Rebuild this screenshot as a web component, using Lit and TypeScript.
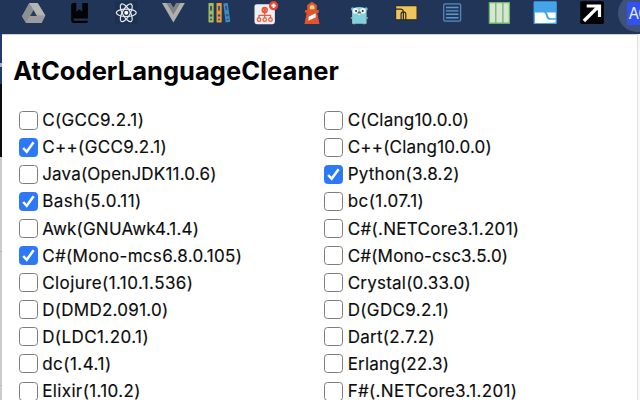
import { LitElement, html, svg, css } from "lit";
import { customElement, property } from "lit/decorators.js";
import { styleMap } from "lit/directives/style-map.js";

interface Language {
  name: string;
  tracking: number;
  checked?: boolean;
}

const LANGUAGES: Language[] = [
  { name: "C(GCC9.2.1)", tracking: 0.36 },
  { name: "C(Clang10.0.0)", tracking: 0.22 },
  { name: "C++(GCC9.2.1)", tracking: 0.34, checked: true },
  { name: "C++(Clang10.0.0)", tracking: 0.2 },
  { name: "Java(OpenJDK11.0.6)", tracking: 0.19 },
  { name: "Python(3.8.2)", tracking: 0.24, checked: true },
  { name: "Bash(5.0.11)", tracking: 0.46, checked: true },
  { name: "bc(1.07.1)", tracking: 0.44 },
  { name: "Awk(GNUAwk4.1.4)", tracking: 0.2 },
  { name: "C#(.NETCore3.1.201)", tracking: 0.3 },
  { name: "C#(Mono-mcs6.8.0.105)", tracking: 0.31, checked: true },
  { name: "C#(Mono-csc3.5.0)", tracking: 0.18 },
  { name: "Clojure(1.10.1.536)", tracking: 0.42 },
  { name: "Crystal(0.33.0)", tracking: 0.22 },
  { name: "D(DMD2.091.0)", tracking: 0.28 },
  { name: "D(GDC9.2.1)", tracking: 0.36 },
  { name: "D(LDC1.20.1)", tracking: 0.42 },
  { name: "Dart(2.7.2)", tracking: 0.28 },
  { name: "dc(1.4.1)", tracking: 0.48 },
  { name: "Erlang(22.3)", tracking: 0.2 },
  { name: "Elixir(1.10.2)", tracking: 0.37 },
  { name: "F#(.NETCore3.1.201)", tracking: 0.31 },
];

// Every icon is drawn around x = 0, with y measured from the top of the bar.
const ICONS = [
  // drive
  svg`<path d="M-3.9 3H4.3L12 15.6 8.2 23H-7.2L-11.3 16.2Z" fill="#a4a6a7"/>
    <path d="M-3.9 3 .1 10-7.2 23-11.3 16.2Z" fill="#8c8f91"/>
    <path d="M-3.9 3H4.3L12 15.6H3.8Z" fill="#b5b5b4"/>
    <path d="M-3.2 15.6H12L8.2 23H-7.2Z" fill="#9a9c9d"/>
    <path d="M.2 10 3.6 15.9H-3.2Z" fill="#263b61"/>`,
  // book
  svg`<path d="M-5.5 3H-3V11.8L0 9.2 3 11.8V3H7.6Q8.6 3 8.6 4V18.6H-5.5V20.7H8.6V21.6Q8.6 22.9 7.4 22.9H-5.5Q-8.1 22.9-8.1 20V5.6Q-8.1 3-5.5 3Z" fill="#020305"/>`,
  // atom
  svg`<rect x="-11.4" y="1.5" width="22.8" height="22.5" fill="#1c3050"/>
    <g fill="none" stroke="#e5e9ed" stroke-width="1.25" transform="translate(0 12.8)">
      <ellipse rx="10" ry="3.8"/><ellipse rx="10" ry="3.8" transform="rotate(60)"/><ellipse rx="10" ry="3.8" transform="rotate(120)"/>
    </g><circle cy="12.8" r="2" fill="#fff"/>`,
  // chevron
  svg`<path d="M-11.3 3H11.6L.1 22.5Z" fill="#afb0ad"/><path d="M-6.8 3H-2.7L.1 7.7 2.9 3H7L.1 14.8Z" fill="#7e8186"/><path d="M-2.7 3H2.9L.1 7.7Z" fill="#213559"/>`,
  // binders
  svg`<rect x="-10.8" y="3" width="5.2" height="19.4" rx=".6" fill="#9cbd60"/>
    <rect x="-2.8" y="3" width="5.2" height="19.4" rx=".6" fill="#e99b3c"/>
    <path d="M4 3.6 8.4 3 11 21.8 6.4 22.5Z" fill="#3b8dcf"/>
    <g fill="#3f5160"><rect x="-9.2" y="6" width="1.9" height="4.6"/><circle cx="-8.2" cy="15.5" r="1.3"/><rect x="-9.2" y="18.7" width="1.9" height="1.5"/>
    <rect x="-1.2" y="6" width="1.9" height="4.6"/><circle cx="-.2" cy="15.5" r="1.3"/><rect x="-1.2" y="18.7" width="1.9" height="1.5"/>
    <path d="M5.7 6 7.5 5.8 8.1 10 6.3 10.3Z"/><circle cx="7.9" cy="15.3" r="1.3"/><path d="M7.4 18.8 9.2 18.5 9.4 20 7.6 20.3Z"/></g>`,
  // sitemap
  svg`<rect x="-11.8" y="4.2" width="20.4" height="20" rx="2.4" fill="#eeeff0"/>
    <g fill="none" stroke="#e85c3d" stroke-width="1.25"><path d="M-1.6 13V18M-7.3 18V15.4H4.2V18"/>
    <circle cx="-7.3" cy="19.7" r="1.75"/><circle cx="-1.6" cy="19.7" r="1.75"/><circle cx="4.2" cy="19.7" r="1.75"/></g>
    <circle cx="-1.6" cy="10" r="3.2" fill="#e85539"/><path d="M-2.3 8.7-3.5 10-2.3 11.3M-.9 8.7.3 10-.9 11.3" fill="none" stroke="#f6b6a4" stroke-width=".6"/>
    <circle cx="7.3" cy="5.7" r="4.6" fill="#e1492f"/><path d="M7.3 3.5V7.9M5.1 5.7H9.5" stroke="#fff" stroke-width="1.8"/>`,
  // lighthouse
  svg`<path d="M-.4 1.8 4.5 5V10H6.5V12.8H5L7.2 24H-7.8L-5.6 12.8H-7.2V10H-5.1V5Z" fill="#e15430"/>
    <path d="M-2.5 9.3V7Q-2.2 5-.2 5 2 5 2.2 7V9.3Z" fill="#f5d674"/><path d="M-3.6 16.7 3.2 13.2 3.6 17.2-4 20.8Z" fill="#fff"/>`,
  // gopher
  svg`<ellipse cx="-6.7" cy="9" rx="1.6" ry="1.7" fill="#75b9c5"/><ellipse cx="6.8" cy="9" rx="1.6" ry="1.7" fill="#75b9c5"/>
    <path d="M-7.2 23.8V11Q-7.2 7 0 7T7.3 11V23.8Z" fill="#83cfdd"/>
    <circle cx="-3.8" cy="10.8" r="2.9" fill="#eef4f3"/><circle cx="3.6" cy="10.8" r="2.9" fill="#eef4f3"/>
    <circle cx="-3.2" cy="11" r="1" fill="#26333b"/><circle cx="3.4" cy="11" r="1" fill="#26333b"/>
    <rect x="-1.1" y="12.8" width="2" height="2.4" fill="#eee7da"/><ellipse cy="12.4" rx="1.8" ry="1" fill="#705b4a"/>
    <path d="M-7.4 17.5-8.4 18.5M7.4 17.5 8.5 18.5M-6 23.6H-4M4 23.6H6" stroke="#c6ab86" stroke-width="1.2"/>`,
  // folder
  svg`<rect x="-10.7" y="5.6" width="21.5" height="14.2" rx=".5" fill="#efc45b" stroke="#292d2c" stroke-width="1.2"/>
    <path d="M-10.5 9.2H-5.4Q-3.2 9.4-2.9 11.6M-5.2 20V14Q-5.2 11.8-2.9 11.8T-.5 14V20M-2.9 12V20" fill="none" stroke="#292d2c" stroke-width="1.2"/>`,
  // list
  svg`<rect x="-8.6" y="3.9" width="17" height="17.3" rx="1.4" fill="#203b61" stroke="#588bbb" stroke-width="1.2"/>
    <path d="M-6.3 7.5H6.2M-6.3 10.9H6.2M-6.3 14.3H6.2M-6.3 17.7H6.2" stroke="#6296c5" stroke-width="1.4"/>`,
  // columns
  svg`<rect x="-10.3" y="2.4" width="20.8" height="21" fill="#d8e5d3"/>
    <path d="M-9.9 2.4V23.4M-3.5 2.4V23.4M3.6 2.4V23.4M10.1 2.4V23.4M-10.4 2.7H10.6M-10.4 23.2H10.6" stroke="#6cbb64" stroke-width="1.3"/>`,
  // panel
  svg`<rect x="-11.7" y="1.3" width="23.2" height="22.8" rx="1.2" fill="#45a4e8"/>
    <path d="M-10.4 12.6H-1.6Q.2 13 .8 15.8 1.5 19.7 4 19.8H10.4V22.3Q10.4 23-10.4 23Z" fill="#fff"/>
    <path d="M1.2 12.6H10.4V18.2H5Q3.2 18 2.7 15.5 2.2 13.3 1.2 12.6Z" fill="#fff"/>`,
  // arrow
  svg`<rect x="-12" y="1.2" width="23.5" height="22.8" rx="1" fill="#010101"/>
    <path d="M-8.4 21 6.5 6.1" stroke="#fff" stroke-width="3.4"/><path d="M-5.6 6H7.2V17" fill="none" stroke="#fff" stroke-width="3.2"/><path d="M0 5H8V13Z" fill="#fff"/>`,
];

@customElement("extension-bar")
class ExtensionBar extends LitElement {
  static styles = css`
    :host { display: flex; height: 34px; padding-left: 9.9px; background: #213559; overflow: hidden; box-sizing: border-box; }
    .icon { flex: none; width: 46.58px; height: 34px; overflow: visible; display: block; }
    .avatar { flex: none; width: 38px; height: 38px; margin: -6px 0 0 2.5px; border-radius: 50%; background: #40517a; display: flex; align-items: center; justify-content: center; }
    .initials { width: 21px; height: 23px; box-sizing: border-box; padding-left: 1px; background: #3251ef; color: #e8ebff; font: 15.5px/24px Inter, sans-serif; letter-spacing: -0.3px; margin-left: 2px; }
  `;
  render() {
    return html`
      ${ICONS.map((icon) => html`<svg class="icon" viewBox="-23.29 0 46.58 34">${icon}</svg>`)}
      <div class="avatar"><div class="initials">AC</div></div>
    `;
  }
}

@customElement("language-option")
class LanguageOption extends LitElement {
  @property() name = "";
  @property({ type: Number }) tracking = 0;
  @property({ type: Boolean }) checked = false;
  static styles = css`
    :host { display: flex; align-items: center; height: 27.1px; }
    .box { flex: none; width: 19px; height: 19px; box-sizing: border-box; border: 1.3px solid #7d7d7d; border-radius: 3.5px; background: #fff; margin-right: 4.4px; }
    .box.on { border-color: #2d78f6; background: #2d78f6; }
    .mark { display: block; width: 100%; height: 100%; overflow: visible; }
    .label { font: 17px/27px Inter, sans-serif; color: #0c0c0c; white-space: nowrap; padding-top: 1px; -webkit-text-stroke: 0.15px #0c0c0c; }
  `;
  render() {
    return html`
      <span class="box ${this.checked ? "on" : ""}">
        ${this.checked
          ? html`<svg class="mark" viewBox="1 1 17 17"><path d="M4.2 10 7.7 13.8 14.6 4.3" fill="none" stroke="#fff" stroke-width="2.5"/></svg>`
          : null}
      </span>
      <span class="label" style=${styleMap({ letterSpacing: `${this.tracking}px` })}>${this.name}</span>
    `;
  }
}

@customElement("app-root")
class AppRoot extends LitElement {
  static styles = css`
    :host { display: block; width: 640px; height: 400px; overflow: hidden; background: #213559; }
    .body { display: grid; grid-template-columns: 1.5px 1fr 3.5px; height: 366px; }
    .behind { background: linear-gradient(#213b70 0 29px, #a8adb8 29px 33px, #1e3a70 33px 50px, #0b0c10 50px 123.5px, #ccc 123.5px 217px, #b5b5b5 217px 218px, #ccc 218px 351px, #bbb 351px 352px, #ccc 352px); }
    .edge { background: #f7f7f7; border-left: 1px solid #e0e0e0; }
    .popup { background: #fff; border-top: 1px solid #ccd0dc; padding: 21px 0 0 11.7px; overflow: hidden; }
    .title { margin: 0; height: 30px; font: 700 25.5px/30px Inter, sans-serif; letter-spacing: 0.04px; color: #000; white-space: nowrap; }
    .list { display: grid; grid-template-columns: 305.5px 1fr; padding: 20.6px 0 0 5.6px; }
  `;
  render() {
    return html`
      <extension-bar></extension-bar>
      <div class="body">
        <div class="behind"></div>
        <main class="popup">
          <h1 class="title">AtCoderLanguageCleaner</h1>
          <div class="list">
            ${LANGUAGES.map((l) => html`<language-option .name=${l.name} .tracking=${l.tracking} .checked=${!!l.checked}></language-option>`)}
          </div>
        </main>
        <div class="edge"></div>
      </div>
    `;
  }
}
